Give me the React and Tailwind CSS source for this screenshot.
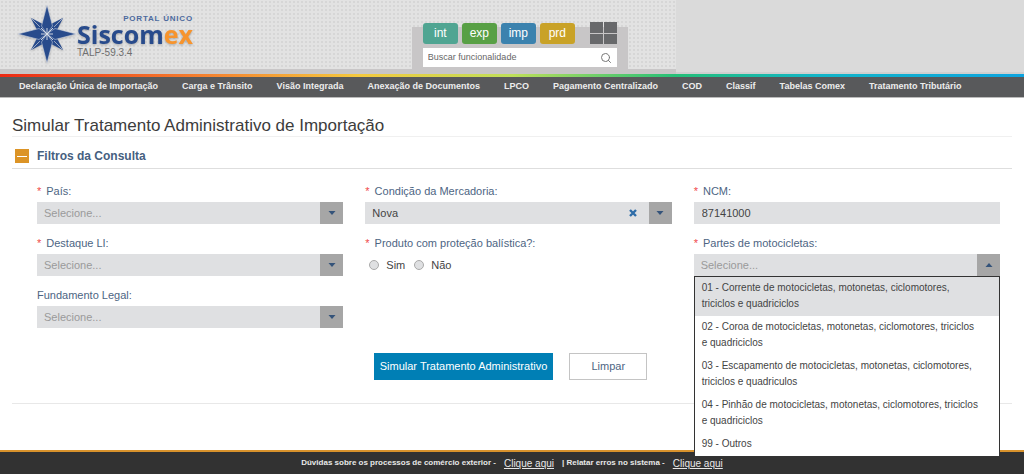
import { useState } from 'react';
import { Search } from 'lucide-react';
import clsx from 'clsx';

const menu = [
  'Declaração Única de Importação',
  'Carga e Trânsito',
  'Visão Integrada',
  'Anexação de Documentos',
  'LPCO',
  'Pagamento Centralizado',
  'COD',
  'Classif',
  'Tabelas Comex',
  'Tratamento Tributário',
];

const environments = [
  { name: 'int', color: 'bg-[#50a592]' },
  { name: 'exp', color: 'bg-[#58a045]' },
  { name: 'imp', color: 'bg-[#3b82ae]' },
  { name: 'prd', color: 'bg-[#c9a227]' },
];

const parts = [
  '01 - Corrente de motocicletas, motonetas, ciclomotores, triciclos e quadriciclos',
  '02 - Coroa de motocicletas, motonetas, ciclomotores, triciclos e quadriciclos',
  '03 - Escapamento de motocicletas, motonetas, ciclomotores, triciclos e quadriculos',
  '04 - Pinhão de motocicletas, motonetas, ciclomotores, triciclos e quadriciclos',
  '99 - Outros',
];

function CompassStar() {
  const angles = [0, 90, 180, 270];
  return (
    <svg viewBox="-29 -29 58 58" className="h-[58px] w-[58px] shrink-0 drop-shadow-[0_1px_1px_rgba(0,0,0,0.2)]" aria-hidden="true">
      <g fill="#284b8c">
        {angles.map(a => (
          <path key={a} d="M0 -23 L4.5 -9 L0 0 L-4.5 -9 Z" transform={`rotate(${a + 45})`} />
        ))}
      </g>
      <g stroke="#e2e2e2" strokeWidth="0.6">
        {angles.map(a => (
          <path key={a} d="M0 -22 V-10" transform={`rotate(${a + 45})`} />
        ))}
      </g>
      <g fill="#284b8c" stroke="#dfe3ea" strokeWidth="0.5">
        {angles.map(a => (
          <path key={a} d="M0 -29 L5.5 -8 L0 0 L-5.5 -8 Z" transform={`rotate(${a})`} />
        ))}
      </g>
      <g stroke="#dfe3ea" strokeWidth="0.9">
        {angles.map(a => (
          <path key={a} d="M0 0 V-6 M0 0 L6 -6" transform={`rotate(${a})`} />
        ))}
      </g>
    </svg>
  );
}

function Logo() {
  return (
    <a href="#inicio" className="flex items-start gap-px pl-[18px] pt-[5px]">
      <CompassStar />
      <span className="flex flex-col pt-[9px]">
        <span className="self-end text-[8px] leading-[10px] font-bold tracking-widest text-[#4c6a9e]">PORTAL ÚNICO</span>
        <span className="font-['Open_Sans',sans-serif] text-[25px] leading-[21px] font-bold text-[#284b8c] drop-shadow-[0_1px_1px_rgba(0,0,0,0.25)]">
          Siscom<span className="text-[#f7942d]">ex</span>
        </span>
        <span className="text-[10px] leading-[15px] text-[#6f6f6f]">TALP-59.3.4</span>
      </span>
    </a>
  );
}

function Label({ htmlFor, required, children }) {
  return (
    <label htmlFor={htmlFor} className="flex h-[21px] items-center text-[#4d6583]">
      {required && <span className="mr-[5px] text-[#f04a4a]">*</span>}
      {children}
    </label>
  );
}

function Dropdown({ id, label, required, value = '', options = [], open, onToggle, onChange, onClear, children }) {
  return (
    <div>
      <Label htmlFor={id} required={required}>{label}</Label>
      <div className="relative flex h-[22px] bg-[#dfe0e2]">
        <select
          id={id}
          value={value}
          onChange={e => onChange?.(e.target.value)}
          onMouseDown={onToggle}
          className={clsx('w-full appearance-none px-[7px] outline-none', value ? 'text-[#444]' : 'text-[#9a9a9a]')}
        >
          <option value="">Selecione...</option>
          {options.map(o => <option key={o} value={o}>{o}</option>)}
        </select>
        {onClear && (
          <button type="button" aria-label="Remover seleção" onClick={onClear} className="shrink-0 px-3">
            <svg viewBox="0 0 8 8" className="h-2 w-2" stroke="#2d6ca8" strokeWidth="2.4"><path d="M1 1 L7 7 M7 1 L1 7" /></svg>
          </button>
        )}
        <span className="pointer-events-none flex w-[23px] shrink-0 items-center justify-center bg-[#a6a6a6]">
          <svg viewBox="0 0 8 4" className={clsx('h-1 w-2', open && 'rotate-180')} fill="#34537a"><path d="M0.5 0 H7.5 L4 4 Z" /></svg>
        </span>
        {children}
      </div>
    </div>
  );
}

export default function App() {
  const [condition, setCondition] = useState('Nova');
  const [ballistic, setBallistic] = useState('');
  const [open, setOpen] = useState(true);
  const [part, setPart] = useState('');

  return (
    <div className="flex min-h-screen flex-col bg-white pb-[2px] font-['Liberation_Sans',Arial,sans-serif] text-[11px] text-[#444]">
      <header className="flex h-[74px] bg-[#dadada]">
        <div className="flex w-[66%] border-b-[5px] border-[#c8c6c7] bg-[#e2e2e2] bg-[radial-gradient(#d6d6d6_1px,transparent_1px)] bg-[size:4px_4px]">
          <Logo />
          <div className="mt-[27px] mr-12 ml-auto w-[216px] bg-[#c8c6c7] px-[11px]">
            <div className="-mt-[5px] flex items-center gap-1">
              {environments.map(e => (
                <button key={e.name} type="button" className={clsx('h-[21px] w-[35px] rounded-[3px] text-[12px] leading-[20px] text-white', e.color)}>{e.name}</button>
              ))}
              <button type="button" aria-label="Módulos" className="ml-auto grid h-[22px] w-[27px] grid-cols-2 gap-px">
                <span className="bg-[#68696b]" />
                <span className="bg-[#68696b]" />
                <span className="bg-[#68696b]" />
                <span className="bg-[#68696b]" />
              </button>
            </div>
            <div className="mt-1 flex h-[19px] items-center bg-white px-[5px]">
              <input type="text" aria-label="Buscar funcionalidade" placeholder="Buscar funcionalidade" className="min-w-0 flex-1 text-[9px] outline-none placeholder:text-[#666]" />
              <Search className="h-3 w-3 text-[#777]" />
            </div>
          </div>
        </div>
        <div className="flex-1 border-b-2 border-[#cfcfcf]" />
      </header>

      <div className="h-[3px] bg-[linear-gradient(to_right,#ec2a14,#f58a32_22%,#f4c93f_35%,#bfe05a_50%,#25bf78_66%,#12b5c8_80%,#0ea4df)]" />
      <nav className="flex h-[21px] items-center gap-6 border-b border-[#bbb] bg-[#58595b] pl-[19px] text-[9px] font-bold whitespace-nowrap text-[#ededed]">
        {menu.map(m => <a key={m} href="#menu">{m}</a>)}
      </nav>

      <main className="px-3">
        <h1 className="mt-[18px] border-b border-[#f0f0f0] text-[17px] leading-[20px] text-[#3c3c3c]">Simular Tratamento Administrativo de Importação</h1>
        <div className="flex h-8 items-center gap-2 border-b border-[#dedede] pt-[7px] pl-[3px]">
          <button type="button" aria-label="Recolher filtros" className="flex h-[14px] w-[14px] items-center justify-center bg-[#dc9426]">
            <span className="h-px w-[10px] bg-white" />
          </button>
          <h2 className="text-[12px] font-bold text-[#46607f]">Filtros da Consulta</h2>
        </div>

        <form onSubmit={e => e.preventDefault()} className="border-b border-[#e8e8e8] pb-[23px]">
          <div className="grid grid-cols-3 gap-x-[22px] gap-y-[9px] pt-3 pr-3 pl-[25px]">
            <Dropdown id="pais" label="País:" required />
            <Dropdown
              id="condicao"
              label="Condição da Mercadoria:"
              required
              value={condition}
              options={['Nova', 'Usada']}
              onChange={setCondition}
              onClear={condition ? () => setCondition('') : undefined}
            />
            <div>
              <Label htmlFor="ncm" required>NCM:</Label>
              <input id="ncm" type="text" defaultValue="87141000" className="h-[22px] w-full bg-[#dfe0e2] px-2 outline-none" />
            </div>

            <Dropdown id="destaque" label="Destaque LI:" required />
            <fieldset>
              <legend className="flex h-[21px] items-center text-[#4d6583]">
                <span className="mr-[5px] text-[#f04a4a]">*</span>Produto com proteção balística?:
              </legend>
              <div className="flex h-[22px] items-center gap-[9px] pl-1">
                {['Sim', 'Não'].map(v => (
                  <label key={v} className="flex items-center gap-[7px]">
                    <input
                      type="radio"
                      name="balistica"
                      checked={ballistic === v}
                      onChange={() => setBallistic(v)}
                      className="h-[10px] w-[10px] appearance-none rounded-full border border-[#aaa] bg-[#dfe0e2] checked:bg-[#34537a]"
                    />
                    {v}
                  </label>
                ))}
              </div>
            </fieldset>
            <Dropdown
              id="partes"
              label="Partes de motocicletas:"
              required
              value={part}
              options={parts}
              open={open}
              onChange={setPart}
              onToggle={e => { e.preventDefault(); setOpen(!open); }}
            >
              {open && (
                <ul role="listbox" aria-label="Partes de motocicletas" className="absolute top-full left-0 z-10 w-full border border-[#333] bg-white">
                  {parts.map((p, i) => (
                    <li
                      key={p}
                      role="option"
                      aria-selected={part === p}
                      onClick={() => { setPart(p); setOpen(false); }}
                      className={clsx('pt-[3px] pr-[19px] pb-1 pl-[7px] text-[10px] leading-[16px] hover:bg-[#dfe0e2]', i === 0 && 'bg-[#dfe0e2]')}
                    >
                      {p}
                    </li>
                  ))}
                </ul>
              )}
            </Dropdown>

            <Dropdown id="fundamento" label="Fundamento Legal:" />
          </div>

          <div className="mt-[25px] flex justify-center gap-4 pr-[3px]">
            <button type="submit" className="h-[27px] bg-[#007fb5] px-[6px] text-white">Simular Tratamento Administrativo</button>
            <button type="reset" className="h-[27px] w-[78px] border border-[#c4c4c4] text-[#4d6583]">Limpar</button>
          </div>
        </form>
      </main>

      <footer className="mt-auto flex h-[24px] items-center justify-center gap-2 border-t-2 border-[#d8922c] bg-[#323232] text-[8px] font-bold text-[#e8e8e8]">
        <span>Dúvidas sobre os processos de comércio exterior -</span>
        <a href="#duvidas" className="text-[10px] font-normal underline">Clique aqui</a>
        <span>| Relatar erros no sistema -</span>
        <a href="#erros" className="text-[10px] font-normal underline">Clique aqui</a>
      </footer>
    </div>
  );
}
